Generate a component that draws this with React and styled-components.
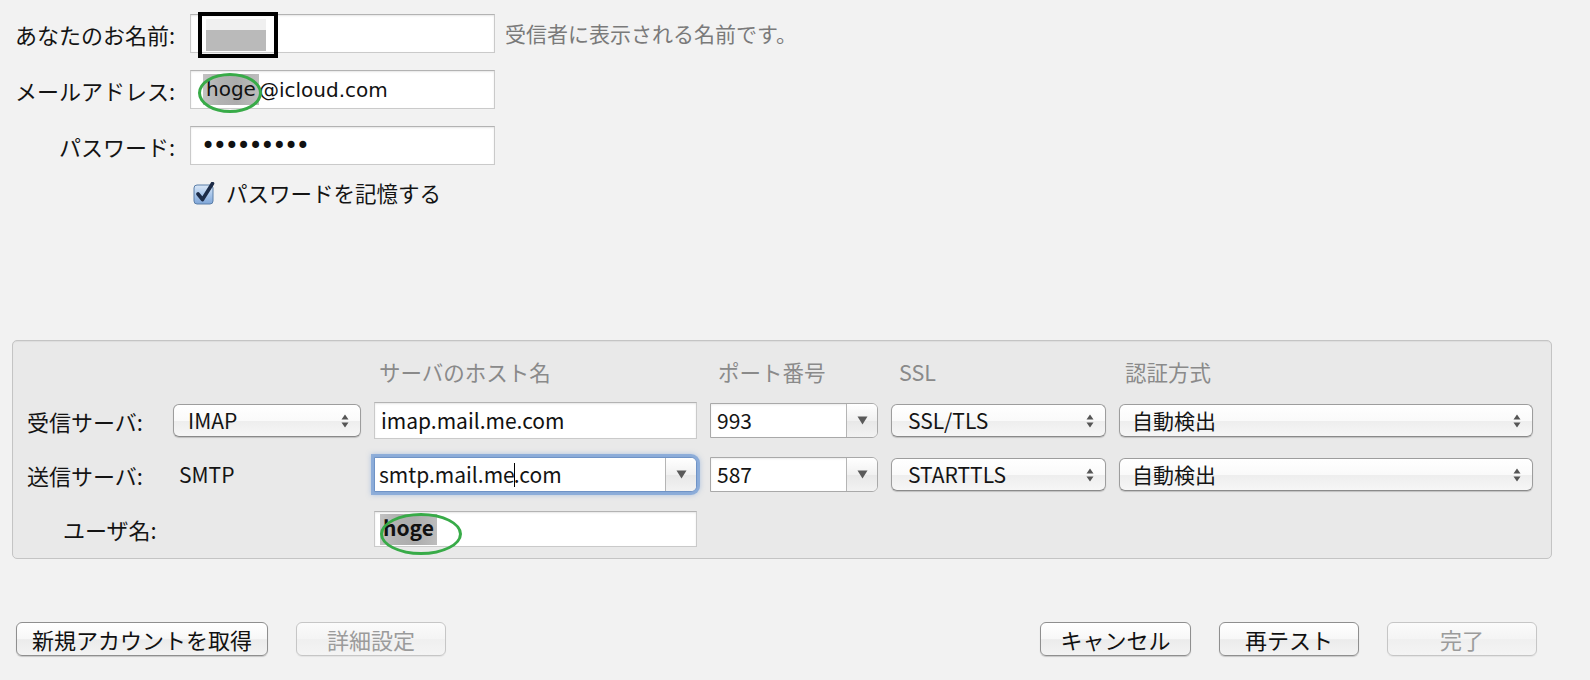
import React from "react";
import styled, { createGlobalStyle } from "styled-components";

const GlobalStyle = createGlobalStyle`
  html, body {
    margin: 0;
    padding: 0;
    background: #f2f2f2;
  }
  body {
    width: 1590px;
    height: 680px;
    overflow: hidden;
    font-family: "Noto Sans CJK JP", "Noto Sans", sans-serif;
    color: #141414;
  }
`;

const Page = styled.div`
  width: 1590px;
  height: 680px;
  display: flex;
  flex-direction: column;
`;

/* ---------- top account form ---------- */

const AccountForm = styled.div`
  display: grid;
  grid-template-columns: 190px 305px 1fr;
  grid-template-rows: 39px 39px 39px 22px;
  row-gap: 17px;
  padding-top: 14px;
  align-items: center;
`;

const Label = styled.div`
  font-size: 22px;
  line-height: 1;
  text-align: right;
  padding-right: 15px;
  white-space: nowrap;
`;

const Hint = styled.div`
  font-size: 21px;
  line-height: 1;
  color: #7a7a7a;
  padding-left: 10px;
  white-space: nowrap;
`;

const TextField = styled.div`
  position: relative;
  height: ${(p) => p.$h || 39}px;
  box-sizing: border-box;
  background: #fff;
  border: 1px solid #cacaca;
  border-top-color: #b3b3b3;
  box-shadow: inset 0 1px 2px rgba(0, 0, 0, 0.1);
  display: flex;
  align-items: center;
  padding-left: ${(p) => p.$pad ?? 10}px;
  font-family: "DejaVu Sans", "Noto Sans", sans-serif;
  font-size: 20px;
  color: #111;
  white-space: nowrap;
`;

const Blurred = styled.span`
  background: linear-gradient(90deg, #c2c2c2, #b2b2b2 30%, #acacac 60%, #bdbdbd);
  padding: 3px 3px 4px;
  font-weight: ${(p) => (p.$bold ? 700 : 400)};
`;

const NameBlur = styled.span`
  display: block;
  width: 60px;
  height: 32px;
  margin-top: 2px;
  background: linear-gradient(#f0f0f0 0 35%, #bababa 35% 100%);
`;

const Dots = styled.span`
  font-size: 24px;
  letter-spacing: -2.3px;
  color: #111;
`;

const BlackBox = styled.div`
  position: absolute;
  left: 7px;
  top: -3px;
  width: 80px;
  height: 46px;
  box-sizing: border-box;
  border: 4px solid #000;
`;

const Ellipse = styled.div`
  position: absolute;
  left: ${(p) => p.$x}px;
  top: ${(p) => p.$y}px;
  width: ${(p) => p.$w}px;
  height: ${(p) => p.$h}px;
  box-sizing: border-box;
  border: 3px solid #38ab48;
  border-radius: 50%;
  pointer-events: none;
`;

const CheckRow = styled.div`
  grid-column: 2 / 4;
  display: flex;
  align-items: center;
  gap: 10px;
  padding-left: 3px;
  font-size: 21.5px;
  line-height: 1;
  white-space: nowrap;
`;

const CheckIcon = () => (
  <svg width="23" height="23" viewBox="0 0 23 23">
    <defs>
      <linearGradient id="cb" x1="0" y1="0" x2="0" y2="1">
        <stop offset="0" stopColor="#dbe8f7" />
        <stop offset="0.5" stopColor="#a9c6ea" />
        <stop offset="1" stopColor="#7fa6d8" />
      </linearGradient>
    </defs>
    <rect x="1" y="3" width="19" height="19" rx="3" fill="url(#cb)" stroke="#5b7ea8" />
    <path d="M5 12 L9.5 17.5 L19.5 1.5" fill="none" stroke="#1d2c47" strokeWidth="3.6" strokeLinecap="round" strokeLinejoin="round" />
  </svg>
);

/* ---------- server panel ---------- */

const Panel = styled.div`
  margin: 136px 0 0 12px;
  width: 1540px;
  box-sizing: border-box;
  border: 1px solid #c4c4c4;
  border-radius: 5px;
  background: #e9e9e9;
  box-shadow: inset 0 1px 1px rgba(0, 0, 0, 0.05);
  padding: 19px 0 11px 14px;
  display: grid;
  grid-template-columns: 133px 188px 323px 168px 215px 414px;
  grid-template-rows: 24px 35px 35px 36px;
  column-gap: 13px;
  row-gap: 19px;
  align-items: center;
`;

const ColHead = styled.div`
  font-size: 21.5px;
  line-height: 1;
  color: #8a8a8a;
  padding-left: ${(p) => p.$pad || 0}px;
  white-space: nowrap;
`;

const PanelLabel = styled.div`
  font-size: 22px;
  line-height: 1;
  padding-left: ${(p) => p.$pl || 0}px;
  white-space: nowrap;
`;

const PlainValue = styled.div`
  font-size: 21px;
  line-height: 1;
  padding-left: 6px;
`;

const Select = styled.div`
  height: 33px;
  box-sizing: border-box;
  border: 1px solid #9d9d9d;
  border-bottom-color: #8a8a8a;
  border-radius: 6px;
  background: linear-gradient(#ffffff 0%, #fafafa 50%, #eeeeee 52%, #f6f6f6 100%);
  box-shadow: 0 1px 1px rgba(0, 0, 0, 0.18);
  display: flex;
  align-items: center;
  justify-content: space-between;
  padding: 0 11px 0 ${(p) => p.$pad || 14}px;
  font-size: 21px;
  line-height: 1;
`;

const UpDown = () => (
  <svg width="8" height="14" viewBox="0 0 8 14">
    <path d="M4 0.5 L7.5 5.5 H0.5 Z M4 13.5 L7.5 8.5 H0.5 Z" fill="#555" />
  </svg>
);

const Combo = styled.div`
  height: 35px;
  box-sizing: border-box;
  display: flex;
  border: 1px solid ${(p) => (p.$focus ? "#6f93c6" : "#a9a9a9")};
  border-radius: 0 6px 6px 0;
  background: #fff;
  box-shadow: ${(p) =>
    p.$focus
      ? "0 0 0 3px rgba(122, 160, 214, 0.75), 0 0 5px 3px rgba(122, 160, 214, 0.5)"
      : "inset 0 1px 2px rgba(0, 0, 0, 0.08)"};
`;

const ComboText = styled.div`
  flex: 1;
  display: flex;
  align-items: center;
  padding-left: ${(p) => p.$pad || 6}px;
  font-size: 21px;
  line-height: 1;
  white-space: nowrap;
`;

const ComboButton = styled.div`
  width: 30px;
  border-left: 1px solid #b5b5b5;
  border-radius: 0 5px 5px 0;
  background: linear-gradient(#ffffff, #f1f1f1 50%, #e8e8e8 52%, #f2f2f2);
  display: flex;
  align-items: center;
  justify-content: center;
`;

const DownArrow = () => (
  <svg width="11" height="9" viewBox="0 0 11 9">
    <path d="M0.5 0.5 H10.5 L5.5 8.5 Z" fill="#5a5a5a" />
  </svg>
);

const Caret = styled.span`
  display: inline-block;
  width: 0;
  height: 24px;
  border-left: 1.5px solid #000;
  margin: 0 -1px;
  vertical-align: middle;
`;

const HostText = styled.span`
  font-family: "Noto Sans CJK JP", sans-serif;
  font-size: 21px;
  line-height: 1;
`;

/* ---------- footer buttons ---------- */

const Footer = styled.div`
  margin-top: 63px;
  display: flex;
  justify-content: space-between;
  padding: 0 53px 0 16px;
`;

const ButtonGroup = styled.div`
  display: flex;
  gap: 28px;
`;

const Button = styled.div`
  width: ${(p) => p.$w}px;
  height: 34px;
  box-sizing: border-box;
  border: 1px solid ${(p) => (p.$disabled ? "#c6c6c6" : "#8f8f8f")};
  border-radius: 6px;
  background: ${(p) =>
    p.$disabled
      ? "linear-gradient(#fbfbfb, #f4f4f4 50%, #efefef 52%, #f4f4f4)"
      : "linear-gradient(#ffffff, #f7f7f7 50%, #ebebeb 52%, #f3f3f3)"};
  box-shadow: 0 1px 1px rgba(0, 0, 0, ${(p) => (p.$disabled ? 0.06 : 0.18)});
  color: ${(p) => (p.$disabled ? "#9b9b9b" : "#111")};
  font-size: 22px;
  line-height: 1;
  display: flex;
  align-items: center;
  justify-content: center;
  white-space: nowrap;
`;

export default function App() {
  return (
    <Page>
      <GlobalStyle />
      <AccountForm>
        <Label>あなたのお名前:</Label>
        <TextField $pad={15}>
          <NameBlur />
          <BlackBox />
        </TextField>
        <Hint>受信者に表示される名前です。</Hint>

        <Label>メールアドレス:</Label>
        <TextField $pad={12}>
          <Blurred>hoge</Blurred>@icloud.com
          <Ellipse $x={7} $y={2} $w={64} $h={40} />
        </TextField>
        <div />

        <Label>パスワード:</Label>
        <TextField $pad={10}>
          <Dots>•••••••••</Dots>
        </TextField>
        <div />

        <div />
        <CheckRow>
          <CheckIcon />
          パスワードを記憶する
        </CheckRow>
      </AccountForm>

      <Panel>
        <div />
        <div />
        <ColHead $pad={5}>サーバのホスト名</ColHead>
        <ColHead $pad={8}>ポート番号</ColHead>
        <ColHead $pad={8}>SSL</ColHead>
        <ColHead $pad={6}>認証方式</ColHead>

        <PanelLabel>受信サーバ:</PanelLabel>
        <Select>
          IMAP
          <UpDown />
        </Select>
        <TextField $h={37} $pad={6}>
          <HostText>imap.mail.me.com</HostText>
        </TextField>
        <Combo>
          <ComboText>993</ComboText>
          <ComboButton>
            <DownArrow />
          </ComboButton>
        </Combo>
        <Select $pad={16}>
          SSL/TLS
          <UpDown />
        </Select>
        <Select $pad={12}>
          自動検出
          <UpDown />
        </Select>

        <PanelLabel>送信サーバ:</PanelLabel>
        <PlainValue>SMTP</PlainValue>
        <Combo $focus>
          <ComboText $pad={4}>
            smtp.mail.me<Caret />.com
          </ComboText>
          <ComboButton>
            <DownArrow />
          </ComboButton>
        </Combo>
        <Combo>
          <ComboText>587</ComboText>
          <ComboButton>
            <DownArrow />
          </ComboButton>
        </Combo>
        <Select $pad={16}>
          STARTTLS
          <UpDown />
        </Select>
        <Select $pad={12}>
          自動検出
          <UpDown />
        </Select>

        <PanelLabel $pl={36}>ユーザ名:</PanelLabel>
        <div />
        <TextField $h={36} $pad={5}>
          <Blurred $bold>
            <HostText>hoge</HostText>
          </Blurred>
          <Ellipse $x={5} $y={1} $w={82} $h={42} />
        </TextField>
        <div />
        <div />
        <div />
      </Panel>

      <Footer>
        <ButtonGroup>
          <Button $w={252}>新規アカウントを取得</Button>
          <Button $w={150} $disabled>
            詳細設定
          </Button>
        </ButtonGroup>
        <ButtonGroup>
          <Button $w={151}>キャンセル</Button>
          <Button $w={140}>再テスト</Button>
          <Button $w={150} $disabled>
            完了
          </Button>
        </ButtonGroup>
      </Footer>
    </Page>
  );
}
